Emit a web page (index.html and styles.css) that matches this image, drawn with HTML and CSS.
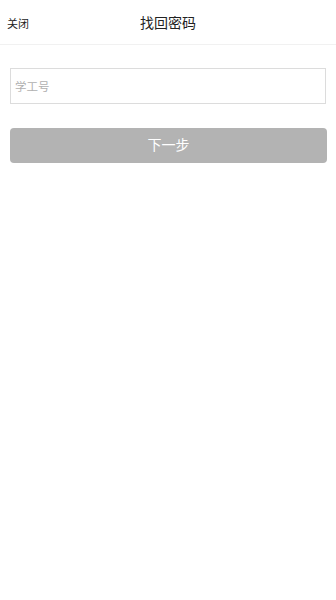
FILE: index.html
```html
<!DOCTYPE html>
<html lang="zh">
<head>
<meta charset="utf-8">
<link rel="stylesheet" href="styles.css">
</head>
<body>
<header class="bar">
  <span class="close">关闭</span>
  <h1 class="title">找回密码</h1>
</header>
<main class="form">
  <input class="field" type="text" placeholder="学工号">
  <button class="next" type="button">下一步</button>
</main>
</body>
</html>
```
FILE: styles.css
```css
html, body {
  margin: 0;
  padding: 0;
  background: #ffffff;
  font-family: "Noto Sans CJK SC", "Noto Sans", sans-serif;
}
.bar {
  position: relative;
  height: 44px;
  border-bottom: 1px solid #f1f1f1;
  display: flex;
  align-items: center;
  justify-content: center;
}
.close {
  position: absolute;
  left: 7px;
  top: 0;
  line-height: 46px;
  font-size: 11px;
  color: #222;
}
.title {
  margin: 0;
  font-size: 14px;
  font-weight: normal;
  color: #222;
}
.form {
  padding: 23px 10px 0 10px;
  display: flex;
  flex-direction: column;
  gap: 24px;
}
.field {
  box-sizing: border-box;
  width: 316px;
  height: 36px;
  margin: 0;
  border: 1px solid #dcdcdc;
  padding: 0 4px;
  font-family: inherit;
  font-size: 11.5px;
  color: #333;
  outline: none;
}
.field::placeholder {
  color: #b0b0b0;
}
.next {
  box-sizing: border-box;
  width: 317px;
  height: 35px;
  border: none;
  border-radius: 4px;
  background: #b3b3b3;
  color: #ffffff;
  font-family: inherit;
  font-size: 14px;
  padding: 0 0 3px 0;
}
```
